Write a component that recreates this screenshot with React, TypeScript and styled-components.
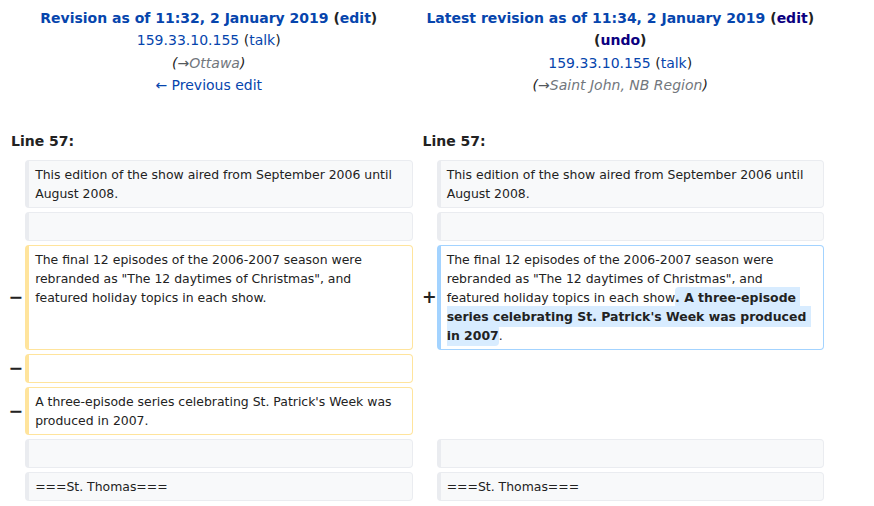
import React from 'react';
import styled, { createGlobalStyle, css } from 'styled-components';

const Global = createGlobalStyle`
  html, body { margin: 0; padding: 0; background: #fff; }
  body {
    font-family: "DejaVu Sans", "Noto Sans", sans-serif;
    color: #222;
    font-size: 14px;
  }
`;

const Page = styled.div`
  width: 827px;
  margin-left: 1px;
`;

const DiffGrid = styled.div`
  display: grid;
  grid-template-columns: minmax(0, 2fr) minmax(0, 48fr) minmax(0, 2fr) minmax(0, 48fr);
  gap: 4px;
  padding: 4px;
  background: #fff;
`;

const TitleCell = styled.div`
  grid-column: span 2;
  text-align: center;
  padding: 3px 7px 4px;
  line-height: 22.4px;
  font-size: 14px;
`;

const TitleLine = styled.div<{ $bold?: boolean }>`
  font-weight: ${(p) => (p.$bold ? 'bold' : 'normal')};
`;

const Link = styled.a<{ $visited?: boolean }>`
  color: ${(p) => (p.$visited ? '#0b0080' : '#0645ad')};
  text-decoration: none;
  cursor: pointer;
`;

const Comment = styled.span`
  font-style: italic;
  color: #222;
`;

const AutoComment = styled.span`
  color: #72777d;
`;

const Arrow = styled.span`
  color: #54595d;
`;

const LineNo = styled.div`
  grid-column: span 2;
  margin-top: 21px;
  padding: 4px 6px;
  font-weight: bold;
  font-size: 14px;
  line-height: 22.4px;
`;

const Marker = styled.div<{ $shift?: number }>`
  display: flex;
  align-items: center;
  justify-content: flex-end;
  font-weight: bold;
  font-size: 17.5px;
  line-height: 1.2;
  color: #222;
  span { margin-right: ${(p) => p.$shift ?? -2}px; }
`;

type Kind = 'context' | 'added' | 'deleted' | 'none';

const Content = styled.div<{ $kind: Kind }>`
  font-size: 12.45px;
  line-height: 19px;
  white-space: pre-wrap;
  word-wrap: break-word;
  padding: 4px 6px;
  color: #222;
  ${(p) =>
    p.$kind === 'none'
      ? css`
          border: 0;
        `
      : css`
          border-style: solid;
          border-width: 1px 1px 1px 4px;
          border-radius: 4px;
        `}
  ${(p) =>
    p.$kind === 'context' &&
    css`
      background: #f8f9fa;
      border-color: #eaecf0;
    `}
  ${(p) =>
    p.$kind === 'added' &&
    css`
      background: #fff;
      border-color: #a3d3ff;
    `}
  ${(p) =>
    p.$kind === 'deleted' &&
    css`
      background: #fff;
      border-color: #ffe49c;
    `}
`;

const Change = styled.span`
  font-weight: bold;
  background: #d8ecff;
  border-radius: 4px;
  padding: 3px 0;
`;

const NBSP = '\u00a0';

const ContextRow: React.FC<{ text: string }> = ({ text }) => (
  <>
    <Marker />
    <Content $kind="context">{text || NBSP}</Content>
    <Marker />
    <Content $kind="context">{text || NBSP}</Content>
  </>
);

const DeletedRow: React.FC<{ text: string }> = ({ text }) => (
  <>
    <Marker>
      <span>−</span>
    </Marker>
    <Content $kind="deleted">{text || NBSP}</Content>
    <Marker />
    <Content $kind="none" />
  </>
);

const App: React.FC = () => (
  <>
    <Global />
    <Page>
      <DiffGrid>
        <TitleCell>
          <TitleLine $bold>
            <Link>Revision as of 11:32, 2 January 2019</Link> (<Link>edit</Link>)
          </TitleLine>
          <TitleLine>
            <Link>159.33.10.155</Link> (<Link>talk</Link>)
          </TitleLine>
          <TitleLine>
            <Comment>
              (<AutoComment><Arrow>→</Arrow>Ottawa</AutoComment>)
            </Comment>
          </TitleLine>
          <TitleLine>
            <Link>← Previous edit</Link>
          </TitleLine>
        </TitleCell>
        <TitleCell>
          <TitleLine $bold>
            <Link>Latest revision as of 11:34, 2 January 2019</Link> (<Link $visited>edit</Link>)
          </TitleLine>
          <TitleLine $bold>
            (<Link $visited>undo</Link>)
          </TitleLine>
          <TitleLine>
            <Link>159.33.10.155</Link> (<Link>talk</Link>)
          </TitleLine>
          <TitleLine>
            <Comment>
              (<AutoComment><Arrow>→</Arrow>Saint John, NB Region</AutoComment>)
            </Comment>
          </TitleLine>
        </TitleCell>

        <LineNo>Line 57:</LineNo>
        <LineNo>Line 57:</LineNo>

        <ContextRow text="This edition of the show aired from September 2006 until August 2008." />
        <ContextRow text="" />

        <Marker>
          <span>−</span>
        </Marker>
        <Content $kind="deleted">
          The final 12 episodes of the 2006-2007 season were rebranded as "The 12 daytimes of Christmas", and featured holiday topics in each show.
        </Content>
        <Marker $shift={-4}>
          <span>+</span>
        </Marker>
        <Content $kind="added">
          The final 12 episodes of the 2006-2007 season were rebranded as "The 12 daytimes of Christmas", and featured holiday topics in each show
          <Change>. A three-episode series celebrating St. Patrick's Week was produced in 2007</Change>.
        </Content>

        <DeletedRow text="" />
        <DeletedRow text="A three-episode series celebrating St. Patrick's Week was produced in 2007." />

        <ContextRow text="" />
        <ContextRow text="===St. Thomas===" />
      </DiffGrid>
    </Page>
  </>
);

export default App;
